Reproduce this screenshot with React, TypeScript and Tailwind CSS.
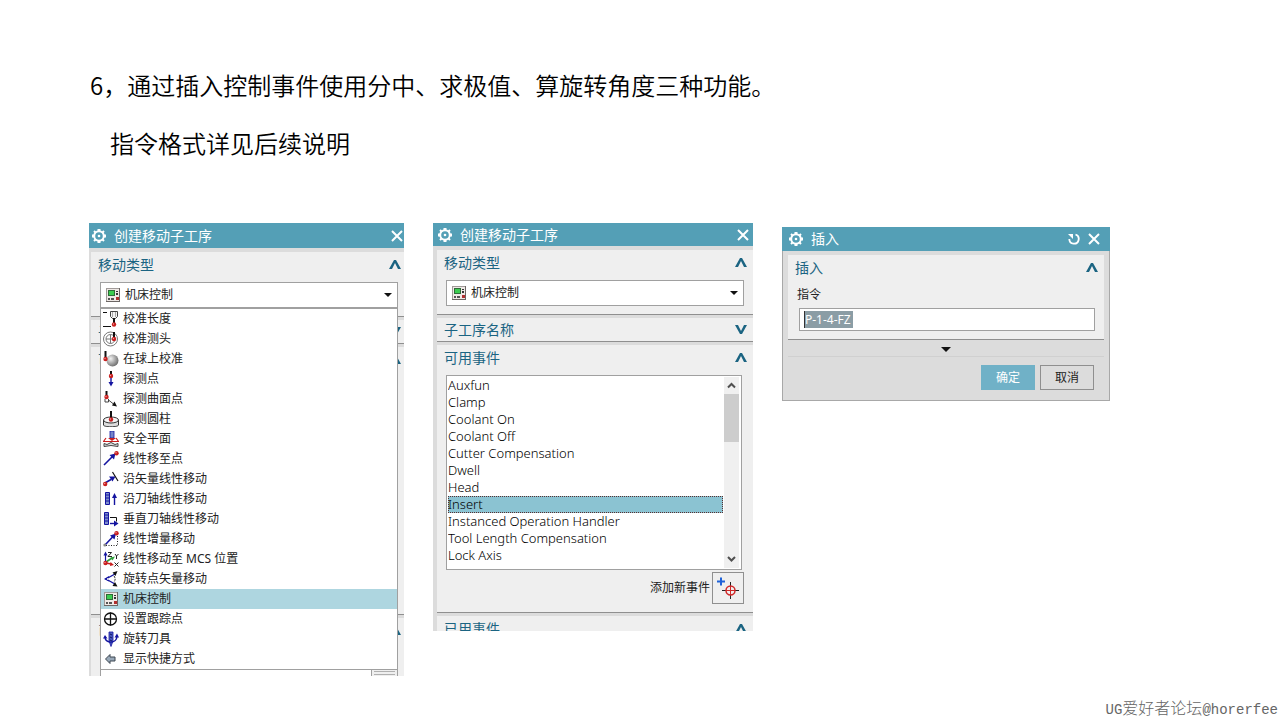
import { useState } from 'react';
import type { ReactNode } from 'react';
import clsx from 'clsx';

const BLUE = '#1414a0';
const RED = '#c81e1e';

function MachineIcon() {
  return (
    <svg width="16" height="16" viewBox="0 0 16 16" shapeRendering="crispEdges" aria-hidden="true">
      <rect x="1" y="1" width="14" height="14" fill="#a09a98" />
      <path d="M14 1h1v14H1v-1h13z" fill="#6c6664" />
      <rect x="2" y="2" width="12" height="12" fill="#efe9e6" />
      <rect x="3" y="3" width="7" height="6" fill="#2f6b38" />
      <rect x="4" y="4" width="5" height="4" fill="#3ccc50" />
      <path d="M11 4h2v1h-2zM11 6h2v2h-2z" fill="#333" />
      <path d="M3 11h2v2H3zM6 11h3v2H6z" fill="#555" />
      <rect x="11" y="10" width="3" height="3" fill="#b03030" />
    </svg>
  );
}

function Icon({ children }: { children: ReactNode }) {
  return (
    <svg width="16" height="16" viewBox="0 0 16 16" fill="none" aria-hidden="true">
      {children}
    </svg>
  );
}

// Esfera da ponta do apalpador
function Ball({ x, y }: { x: number; y: number }) {
  return (
    <>
      <circle cx={x} cy={y} r="2.2" fill={RED} />
      <circle cx={x - 0.5} cy={y - 0.5} r="0.7" fill="#f0a0a0" />
    </>
  );
}

const moves = [
  {
    label: '校准长度',
    icon: (
      <Icon>
        <path d="M0 1.5h4M0 15.5h8" stroke="#111" />
        <path d="M7.5 0.5h7v5l-2 2h-3l-2-2z" fill="#f4f4f4" stroke="#444" />
        <path d="M9.5 1v5M12.5 1v5" stroke="#aaa" />
        <path d="M11 7v5" stroke="#111" strokeWidth="2" />
        <Ball x={11} y={13.5} />
      </Icon>
    ),
  },
  {
    label: '校准测头',
    icon: (
      <Icon>
        <circle cx="7.5" cy="8" r="7" stroke="#777" />
        <circle cx="7.5" cy="8" r="4.5" stroke="#777" />
        <path d="M3 8h9M7.5 3.5v9" stroke="#777" />
        <path d="M11 1v6" stroke="#111" strokeWidth="2" />
        <Ball x={11} y={8} />
      </Icon>
    ),
  },
  {
    label: '在球上校准',
    icon: (
      <Icon>
        <defs>
          <radialGradient id="sphere" cx="0.35" cy="0.35" r="0.7">
            <stop offset="0" stopColor="#f2f2f2" />
            <stop offset="1" stopColor="#6c6c6c" />
          </radialGradient>
        </defs>
        <circle cx="9.5" cy="9.5" r="6" fill="url(#sphere)" />
        <path d="M2.5 0v7" stroke="#111" strokeWidth="2" />
        <Ball x={2.5} y={8} />
      </Icon>
    ),
  },
  {
    label: '探测点',
    icon: (
      <Icon>
        <path d="M8 0v4" stroke="#111" strokeWidth="2" />
        <Ball x={8} y={5} />
        <path d="M8 7v5" stroke={BLUE} strokeWidth="1.4" />
        <path d="M5.5 11h5L8 15.5z" fill={BLUE} />
      </Icon>
    ),
  },
  {
    label: '探测曲面点',
    icon: (
      <Icon>
        <path d="M3.500 0v5" stroke="#111" strokeWidth="2" />
        <Ball x={3.5} y={6} />
        <path d="M2 8v3h3.500V8M5.500 9l5 4" stroke="#444" />
        <path d="M14 15.500l-5-1 2.500-4z" fill="#111" />
      </Icon>
    ),
  },
  {
    label: '探测圆柱',
    icon: (
      <Icon>
        <path d="M0.5 9v5c0 1 3 1.8 7.5 1.8s7.5-.8 7.5-1.8V9" fill="#ddd" stroke="#333" />
        <ellipse cx="8" cy="9" rx="7.5" ry="3" fill="#f5f5f5" stroke="#333" />
        <path d="M8 0v7" stroke="#111" strokeWidth="2" />
        <Ball x={8} y={8.5} />
      </Icon>
    ),
  },
  {
    label: '安全平面',
    icon: (
      <Icon>
        <path d="M7 0h4v7H7z" fill="#7485c8" stroke={BLUE} strokeWidth="0.8" />
        <path d="M3 7L0.5 10.5h15L13 7" stroke={RED} strokeWidth="1.2" />
        <path d="M5 7h8l-4 3z" fill={RED} />
        <path d="M1 15.500V12.500l3 1 4-2 4 2 3-1v3l-7-1z" fill="#ddd" stroke="#444" />
      </Icon>
    ),
  },
  {
    label: '线性移至点',
    icon: (
      <Icon>
        <path d="M1 14L10 5" stroke={BLUE} strokeWidth="1.6" />
        <path d="M12.500 2.500l-1.500 6-4.500-4.500z" fill={BLUE} />
        <Ball x={13.5} y={2.3} />
      </Icon>
    ),
  },
  {
    label: '沿矢量线性移动',
    icon: (
      <Icon>
        <path d="M2 12L8 8.500" stroke={BLUE} strokeWidth="1.6" />
        <path d="M12.500 5.500l-3 5-3.500-5z" fill={BLUE} />
        <path d="M9.500 1l5.500 9" stroke="#111" strokeWidth="1.2" />
        <Ball x={2.2} y={13} />
      </Icon>
    ),
  },
  {
    label: '沿刀轴线性移动',
    icon: (
      <Icon>
        <path d="M2.500 1.500h4v12h-4z" fill="#7e8dcc" stroke={BLUE} />
        <path d="M3 4h3M3 7h3M3 10h3" stroke={BLUE} />
        <path d="M11.500 5v9" stroke={BLUE} strokeWidth="1.4" />
        <path d="M9 7l2.500-5L14 7z" fill={BLUE} />
      </Icon>
    ),
  },
  {
    label: '垂直刀轴线性移动',
    icon: (
      <Icon>
        <path d="M1.500 1.500h4v12h-4z" fill="#7e8dcc" stroke={BLUE} />
        <path d="M2 4h3M2 7h3M2 10h3" stroke={BLUE} />
        <path d="M7 6.500h6.500v4" stroke="#111" />
        <path d="M7 12.500h5" stroke={BLUE} strokeWidth="1.4" />
        <path d="M11 9.500l4.500 3-4.500 3z" fill={BLUE} />
      </Icon>
    ),
  },
  {
    label: '线性增量移动',
    icon: (
      <Icon>
        <path d="M2 14L11 4.500" stroke={BLUE} strokeWidth="1.6" />
        <path d="M13 2.500l-1.500 6-4.500-4z" fill={BLUE} />
        <path d="M3 14.500h11.500V4" stroke="#222" strokeDasharray="1 1.500" />
        <circle cx="1.800" cy="14" r="1.500" fill="#888" />
        <Ball x={13.5} y={2.3} />
      </Icon>
    ),
  },
  {
    label: '线性移动至 MCS 位置',
    icon: (
      <Icon>
        <path d="M2.500 11V3" stroke={BLUE} strokeWidth="1.2" />
        <path d="M0.500 4.500l2-4 2 4z" fill={BLUE} />
        <path d="M5 1.500h3.500l-3.500 4h4M12 3l1.500 2L15.500 3M13.500 5v3M11.500 11.500l4 4M15.500 11.500l-4 4" stroke="#222" />
        <path d="M3 11l6-4" stroke="#2fa03c" strokeWidth="1.600" />
        <path d="M12 5.500l-2.500 4-2-3z" fill="#2fa03c" />
        <path d="M3 12l5 1" stroke={RED} strokeWidth="1.400" />
        <path d="M11 14l-4 1 .5-4z" fill={RED} />
        <Ball x={2.5} y={12} />
      </Icon>
    ),
  },
  {
    label: '旋转点矢量移动',
    icon: (
      <Icon>
        <path d="M12 3L3 8l9 5" stroke={BLUE} strokeWidth="1.400" />
        <path d="M14.500 0l-2 5-3-3.500zM14.500 15.500l-5-.5 2.500-4z" fill="#111" />
        <path d="M11 5c1.500 2 1.500 4 0 6" stroke="#222" strokeDasharray="2 1" />
        <path d="M1 8l5-3v5.500z" fill={BLUE} />
        <circle cx="5" cy="8" r="1" fill="#fff" />
      </Icon>
    ),
  },
  { label: '机床控制', icon: <MachineIcon /> },
  {
    label: '设置跟踪点',
    icon: (
      <Icon>
        <circle cx="7.500" cy="8" r="6" stroke="#111" strokeWidth="1.300" />
        <path d="M1 8h13M7.500 1.500v13" stroke="#111" strokeWidth="1.300" />
      </Icon>
    ),
  },
  {
    label: '旋转刀具',
    icon: (
      <Icon>
        <path d="M6 1h4v9L8 15.500 6 10z" fill="#4a5cc0" stroke={BLUE} strokeWidth="0.800" />
        <path d="M2 6c0 7 12 7 12-1" stroke={BLUE} strokeWidth="1.400" />
        <path d="M0 7.500l2-3.500 2.500 3.500zM11.500 6.500l2.500-4 2 4z" fill={BLUE} />
        <path d="M7 3l2 1M7 6l2 1M7 9l2 1" stroke="#101060" />
      </Icon>
    ),
  },
  {
    label: '显示快捷方式',
    icon: (
      <Icon>
        <path d="M2.500 8l4.500-4.500v2.500h5v4H7v2.500z" fill="#98a8b8" stroke="#3d4650" />
      </Icon>
    ),
  },
];

const events = [
  'Auxfun',
  'Clamp',
  'Coolant On',
  'Coolant Off',
  'Cutter Compensation',
  'Dwell',
  'Head',
  'Insert',
  'Instanced Operation Handler',
  'Tool Length Compensation',
  'Lock Axis',
  'Optional Skip Off',
];

function TitleBar({ title, className, reset }: { title: string; className: string; reset?: boolean }) {
  return (
    <header className={clsx('flex items-center gap-2 bg-[#549fb6] text-white', className)}>
      <svg width="14" height="14" viewBox="0 0 14 14" fill="none" stroke="currentColor" aria-hidden="true">
        <circle cx="7" cy="7" r="4.800" strokeWidth="2" />
        <circle cx="7" cy="7" r="1.300" fill="currentColor" stroke="none" />
        <path d="M7 0v2M7 12v2M0 7h2M12 7h2" strokeWidth="3" />
        <path d="M2 2l1.500 1.500M10.500 10.500L12 12M12 2l-1.500 1.500M3.500 10.500L2 12" strokeWidth="2" />
      </svg>
      <h2 className="flex-1 text-sm leading-5">{title}</h2>
      {reset && (
        <button type="button" aria-label="重置">
          <svg width="12" height="12" viewBox="0 0 12 12" fill="none" stroke="currentColor" strokeWidth="1.800" className="block" aria-hidden="true">
            <path d="M7.500 1.500a4.700 4.700 0 1 1-6.200 4.500" />
            <path d="M0 1h5v5z" fill="currentColor" stroke="none" />
          </svg>
        </button>
      )}
      <button type="button" aria-label="关闭">
        <svg width="12" height="12" viewBox="0 0 12 12" stroke="currentColor" strokeWidth="2" className="block" aria-hidden="true">
          <path d="M1 1l10 10M11 1L1 11" />
        </svg>
      </button>
    </header>
  );
}

interface SectionProps {
  title: string;
  className?: string;
  collapsed?: boolean;
  children?: ReactNode;
}

function Section({ title, className, collapsed, children }: SectionProps) {
  return (
    <section className={clsx('border-b border-[#8f8f8f] bg-[#efefef] pl-[7px]', className)}>
      <button
        type="button"
        aria-expanded={!collapsed}
        className={clsx('flex w-full items-center justify-between text-sm text-[#1b6482]', collapsed ? 'h-[23px]' : 'h-[26px]')}
      >
        {title}
        <svg width="12" height="10" viewBox="0 0 12 10" fill="currentColor" aria-hidden="true">
          <path d={collapsed ? 'M0 0h3l3 6 3-6h3L7 9H5z' : 'M0 9h3l3-6 3 6h3L7 0H5z'} />
        </svg>
      </button>
      {children}
    </section>
  );
}

function MoveSelect() {
  return (
    <>
      <select
        aria-label="移动类型"
        className="block h-[26px] w-full appearance-none border border-[#a0a0a0] bg-white pl-6 text-xs text-[#222]"
      >
        <option>机床控制</option>
      </select>
      <span className="pointer-events-none absolute left-[5px] top-[5px]">
        <MachineIcon />
      </span>
      <svg width="8" height="4" viewBox="0 0 8 4" className="pointer-events-none absolute right-[6px] top-[11px]" aria-hidden="true">
        <path d="M0 0h8L4 4z" fill="#111" />
      </svg>
    </>
  );
}

// Janela com a lista de tipos de movimento aberta
function MoveTypePanel() {
  const [current, setCurrent] = useState('机床控制');

  return (
    <div className="h-[453px] overflow-hidden bg-[#dcdcdc]">
      <TitleBar title="创建移动子工序" className="h-[25px] pl-[3px] pr-px" />
      <div className="pl-[2px]">
        <Section title="移动类型" className="mt-1 pb-2 pr-[3px]">
          <div className="relative ml-[2px] mr-[3px] mt-1">
            <MoveSelect />
            <ul
              role="listbox"
              aria-label="移动类型"
              className="absolute inset-x-0 top-full z-10 border border-[#a0a0a0] bg-white text-xs text-[#222]"
            >
              {moves.map((move) => (
                <li
                  key={move.label}
                  role="option"
                  aria-selected={move.label === current}
                  onClick={() => setCurrent(move.label)}
                  className={clsx('flex h-5 items-center gap-1 pl-[2px]', move.label === current && 'bg-[#aed6e0]')}
                >
                  {move.icon}
                  {move.label}
                </li>
              ))}
            </ul>
          </div>
        </Section>
        <Section title="子工序名称" collapsed className="mt-[3px] pr-[3px]" />
        <Section title="可用事件" className="mt-[3px] h-[268px] pr-[3px]" />
        <Section title="已用事件" className="mt-[3px] pr-[3px]">
          <div className="ml-[2px] mr-[3px] flex h-12 border border-[#a0a0a0] bg-white">
            <div className="flex-1" />
            <div className="w-[26px] border-l border-[#a0a0a0] bg-[#efefef] px-[2px] pt-[26px]">
              <div className="h-1 border-y border-[#b0b0b0]" />
            </div>
          </div>
        </Section>
      </div>
    </div>
  );
}

// Janela com os eventos disponíveis
function EventsPanel() {
  const [selected, setSelected] = useState('Insert');

  return (
    <div className="h-[408px] overflow-hidden bg-[#dcdcdc]">
      <TitleBar title="创建移动子工序" className="h-[23px] pl-[5px] pr-1" />
      <div className="pl-1">
        <Section title="移动类型" className="mt-1 pb-2 pr-[6px]">
          <div className="relative ml-[2px] mr-[3px] mt-1">
            <MoveSelect />
          </div>
        </Section>
        <Section title="子工序名称" collapsed className="mt-[3px] pr-[6px]" />
        <Section title="可用事件" className="mt-[3px] pb-2 pr-[6px]">
          <div className="ml-[2px] mr-[5px] mt-1 flex h-[195px] border border-[#a0a0a0] bg-white p-px pr-[2px]">
            <ul
              role="listbox"
              aria-label="可用事件"
              className="h-[190px] flex-1 overflow-hidden text-[13px] font-light text-black"
            >
              {events.map((event) => (
                <li
                  key={event}
                  role="option"
                  aria-selected={event === selected}
                  onClick={() => setSelected(event)}
                  className={clsx(
                    'h-[17px] leading-[17px]',
                    event === selected && 'bg-[#8bc3d2] outline-1 -outline-offset-1 outline-dotted outline-[#5a3030]',
                  )}
                >
                  {event}
                </li>
              ))}
            </ul>
            <div className="ml-px flex w-[15px] flex-col items-center bg-[#f0f0f0]">
              <svg width="9" height="17" viewBox="0 0 9 17" fill="none" stroke="#505050" strokeWidth="2" aria-hidden="true">
                <path d="M1 10.500L4.500 7 8 10.500" />
              </svg>
              <div className="h-12 w-full bg-[#cdcdcd]" />
              <svg width="9" height="17" viewBox="0 0 9 17" fill="none" stroke="#505050" strokeWidth="2" className="mt-auto" aria-hidden="true">
                <path d="M1 6l3.500 3.500L8 6" />
              </svg>
            </div>
          </div>
          <div className="mr-[3px] mt-[2px] flex items-center justify-end gap-[2px] text-xs text-[#222]">
            <span id="add-event">添加新事件</span>
            <button type="button" aria-labelledby="add-event" className="h-8 w-8 border border-[#8f8f8f]">
              <svg width="30" height="30" viewBox="0 0 30 30" fill="none" aria-hidden="true">
                <path d="M4 8.500h8M8 4.500v8" stroke="#1f62d8" strokeWidth="2" />
                <path d="M9 17.500h17M17.500 9v17" stroke="#222" />
                <circle cx="17.500" cy="17.500" r="4.500" stroke="#d02828" strokeWidth="1.500" />
                <path d="M13 17.500h9M17.500 13v9" stroke="#d02828" />
              </svg>
            </button>
          </div>
        </Section>
        <Section title="已用事件" className="mt-[3px] pr-[6px]" />
      </div>
    </div>
  );
}

// Caixa de diálogo para inserir o comando
function InsertDialog() {
  const [command, setCommand] = useState('P-1-4-FZ');

  return (
    <form className="mt-1" onSubmit={(e) => e.preventDefault()}>
      <TitleBar title="插入" reset className="h-6 pl-[7px] pr-[10px]" />
      <div className="border border-t-0 border-[#a8a8a8] bg-[#dcdcdc] px-[5px] pb-[10px] pt-1">
        <Section title="插入" className="pb-2 pr-[6px]">
          <label htmlFor="command" className="ml-[2px] mt-1 block text-xs leading-5 text-[#222]">
            指令
          </label>
          <div className="ml-1 mr-[3px] mt-[3px] flex h-[23px] items-center border border-[#a0a0a0] bg-white pl-1">
            <input
              id="command"
              value={command}
              onChange={(e) => setCommand(e.target.value)}
              className="field-sizing-content h-[17px] border-l border-[#333] bg-[#8b9da5] pr-[2px] text-xs text-white outline-none"
            />
          </div>
        </Section>
        <div className="flex h-[17px] items-center justify-center border-b border-[#d0d0d0] pt-[2px]">
          <svg width="10" height="5" viewBox="0 0 10 5" aria-hidden="true">
            <path d="M0 0h10L5 5z" fill="#111" />
          </svg>
        </div>
        <div className="mt-2 flex justify-end gap-[5px] pr-[10px] text-xs">
          <button type="submit" className="h-[25px] w-[54px] bg-[#70b1c7] text-white">
            确定
          </button>
          <button type="button" className="h-[25px] w-[54px] border border-[#8f8f8f] text-[#222]">
            取消
          </button>
        </div>
      </div>
    </form>
  );
}

function App() {
  return (
    <div className="flex min-h-screen flex-col bg-white pt-14 font-['Noto_Sans','Noto_Sans_CJK_SC',sans-serif]">
      <div className="pl-[90px] font-['Noto_Sans_CJK_SC',sans-serif] text-2xl text-black">
        <h1 className="font-[350] leading-[58px]">6，通过插入控制事件使用分中、求极值、算旋转角度三种功能。</h1>
        <p className="pl-5 font-[350] leading-[58px]">指令格式详见后续说明</p>
      </div>

      <main className="mt-[51px] grid grid-cols-[315fr_320fr_328fr] items-start gap-[29px] pl-[89px] pr-[170px]">
        <MoveTypePanel />
        <EventsPanel />
        <InsertDialog />
      </main>

      <footer className="mt-auto flex items-center justify-end pr-[2px] font-['Liberation_Mono','Noto_Sans_CJK_SC',monospace] text-sm leading-5 text-[#666]">
        UG<span className="text-base leading-5 font-light">爱好者论坛</span>@horerfee
      </footer>
    </div>
  );
}

export default App;
